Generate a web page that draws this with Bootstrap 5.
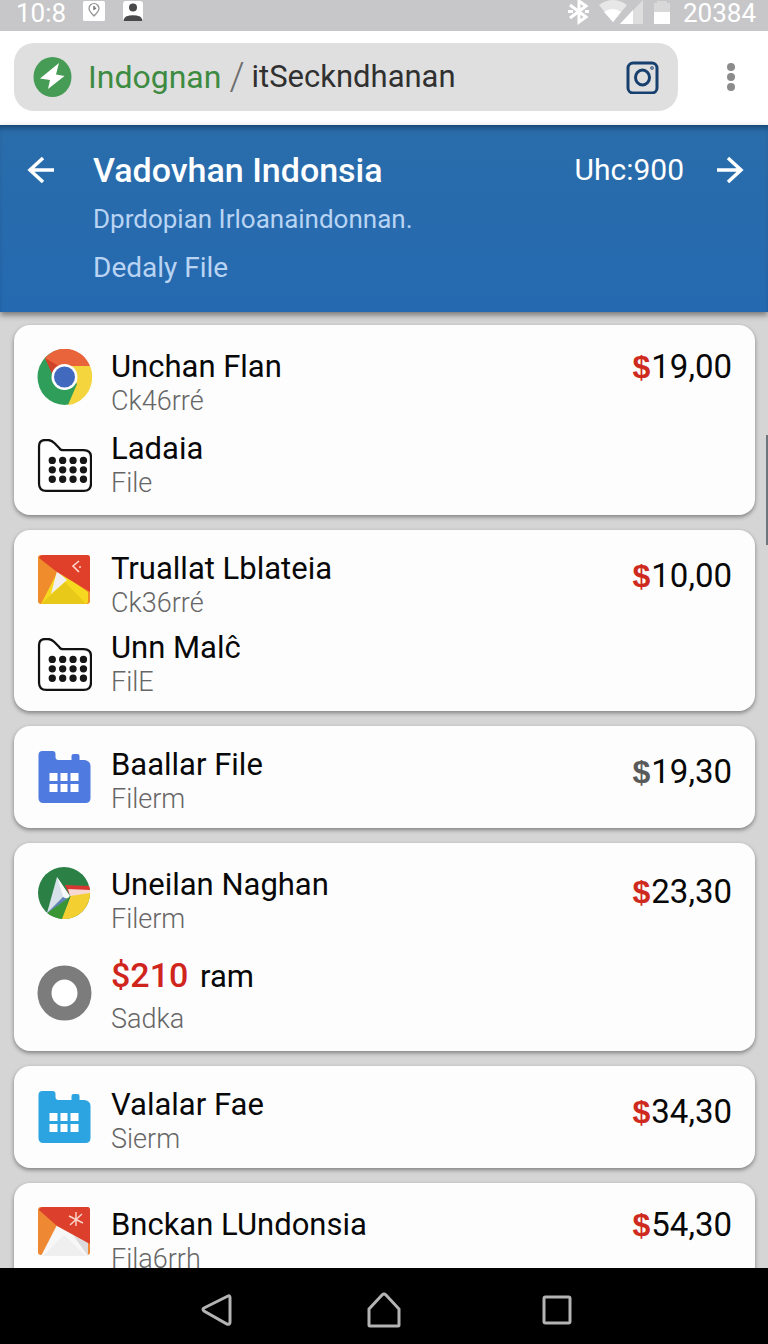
<!DOCTYPE html>
<html lang="id">
<head>
<meta charset="utf-8">
<meta name="viewport" content="width=device-width, initial-scale=1">
<title>Vadovhan Indonsia</title>
<link href="https://cdn.jsdelivr.net/npm/bootstrap@5.3.0/dist/css/bootstrap.min.css" rel="stylesheet">
<style>
  body { font-family: Roboto, "Noto Sans", sans-serif; background: #d5d5d6; color: #080808; }
  svg { display: block; flex: none; }
  .icon-btn { border: 0; background: none; padding: 0; color: inherit; }

  .status-bar { height: 31px; flex: none; background: #c7c7c9; color: #fff; font-size: 26px; line-height: 26px; padding: 0 12px 0 16px; }
  .browser-bar { flex: none; background: #fff; padding: 12px 32px 14px 14px; }
  .address { height: 68px; border-radius: 20px; background: #dfdfe0; padding: 0 19px; margin-right: 48px; font-size: 32px; line-height: 40px; }
  .address a { color: #3d8b40; text-decoration: none; }
  .address .slash { color: #6d6d6d; font-size: 38px; font-weight: 300; margin: 0 7px 0 8px; }
  .address .path { color: #303030; font-size: 31px; }

  .app-header { flex: none; background: linear-gradient(#2a6dab, #2569b0); color: #fff; padding: 25px 24px 24px 27px; z-index: 1;
    box-shadow: 0 3px 6px rgba(0,0,0,.45), inset 0 6px 6px -4px rgba(0,20,40,.55); }
  .app-header h1 { font-size: 34px; line-height: 40px; font-weight: 500; margin: 0; }
  .app-header .text-col { margin-left: 38px; }
  .app-header p { font-size: 28px; line-height: 40px; margin: 9px 0 0; color: #b9d4f3; }
  .app-header .tagline { font-size: 26px; }
  .app-header .total { font-size: 30px; line-height: 40px; margin-right: 32px; }
  .icon-btn.arrow { height: 40px; }

  .list-area { padding: 13px 13px 0 14px; }
  .entry-card { border: 0; border-radius: 16px; background: #fdfdfd; padding: 24px 23px 16px; margin-bottom: 15px;
    box-shadow: 0 2px 4px rgba(0,0,0,.4); }
  .entry-card.snug { padding-top: 21px; padding-bottom: 13px; }
  .entry { gap: 19px; }
  .entry + .entry { margin-top: 14px; }
  .snug .entry + .entry { margin-top: 11px; }
  .entry + .entry.apart { margin-top: 22px; }
  .entry h2 { font-size: 31px; line-height: 36px; font-weight: 400; margin: 0; }
  .entry p { font-size: 27px; line-height: 32px; font-weight: 300; margin: 0; color: #666; }
  .entry.apart p { margin-top: 8px; }
  .amount { color: #d0251c; font-weight: 500; font-size: 34px; margin-right: 4px; }
  .price { font-size: 33px; line-height: 36px; }
  .price.low { margin-top: 7px; }
  .price span { font-family: "Liberation Sans", sans-serif; font-size: 32px; line-height: 32px; font-weight: 700; color: #cf2a20; margin-right: 1px; }
  .price .plain { color: #5a5a5a; }
  .scroll-thumb { position: absolute; right: 0; top: 123px; width: 2px; height: 110px; background: #6c747c; }

  .system-nav { height: 76px; background: #000; color: #b4b4b4; gap: 134px; padding: 8px 0 0 10px; z-index: 2; }
</style>
</head>
<body>
<svg width="0" height="0" class="position-absolute" aria-hidden="true">
  <defs>
    <symbol id="folder" viewBox="0 0 54 54">
      <path d="M2 7Q2 1 8 1H11Q14 1 17 4L22 9Q23 11 26 11H46Q53 11 53 18V44Q53 51 46 51H9Q2 51 2 44Z" fill="#fff" stroke="#111" stroke-width="2.2"/>
      <g stroke="#161616" stroke-width="7.2" stroke-linecap="round" stroke-dasharray="0 10.2">
        <path d="M15 21H46"/><path d="M15 30.300H46"/><path d="M15 39.500H46"/>
      </g>
    </symbol>
    <symbol id="planner" viewBox="0 0 54 54">
      <path d="M1 4Q1 0 5 0H15Q18 0 18 3V6Q18 9 21 9H34V5Q34 3 36 3H40Q42 3 42 5V9H47Q53 10 53 15V47Q53 52 48 52H6Q1 52 1 47Z" fill="currentColor"/>
      <path d="M12 22h8v8h-8zM23 22h7v8h-7zM33 22h8v8h-8zM12 33h8v8h-8zM23 33h7v8h-7zM33 33h8v8h-8z" fill="#fff"/>
    </symbol>
  </defs>
</svg>

<div class="d-flex flex-column vh-100 overflow-hidden">
  <div class="status-bar d-flex justify-content-between">
    <div class="d-flex">
      <span>10:8</span>
      <svg class="ms-3" width="24" height="22" viewBox="0 0 24 22"><rect x="1" y="1" width="22" height="20" rx="1.500" fill="#fff"/><path d="M12 16C8 12 7 10.500 7 8.500a5 5 0 0 1 10 0C17 10.500 16 12 12 16Z" fill="none" stroke="#8d8d90" stroke-width="1.200"/><path d="M12 6v3l2-1" fill="none" stroke="#777" stroke-width="1.500"/></svg>
      <svg class="ms-3" width="22" height="22" viewBox="0 0 22 22"><rect x="1" y="1" width="20" height="20" rx="3" fill="#fff"/><circle cx="11" cy="7.500" r="4" fill="#48484a"/><path d="M2 21Q1 19 4 16.500Q11 14 18 16.500Q21 19 20 21Z" fill="#48484a"/></svg>
    </div>
    <div class="d-flex">
      <svg width="24" height="25" viewBox="0 0 24 25"><path d="M3 5L19 17L12 22V1L19 6L3 18M1 11.500H6M18 11.500H22" fill="none" stroke="#fff" stroke-width="3"/></svg>
      <svg class="ms-2" width="46" height="25" viewBox="0 0 46 25"><path d="M0 5Q14-5 28 5L14 22Z" fill="#e7e7e8"/><path d="M5 12Q14 6 22 12L14 22Z" fill="#fff"/><path d="M21 24L44 0V24Z" fill="#dededf"/><path d="M21 24L34 10V24Z" fill="#fff"/></svg>
      <svg class="ms-2 me-2" width="18" height="25" viewBox="0 0 18 25"><path d="M4 1H14V12H4Z" fill="#d8d8d9"/><path d="M1 3H17V12H1Z" fill="#d8d8d9"/><path d="M1 12H17V24H1Z" fill="#fff"/></svg>
      <span class="ps-1">20384</span>
    </div>
  </div>

  <div class="browser-bar d-flex align-items-center">
    <div class="address d-flex align-items-center flex-grow-1">
      <svg class="me-3" width="39" height="40" viewBox="0 0 39 40"><ellipse cx="19.500" cy="20" rx="19" ry="20" fill="#469b55"/><path d="M26 6L23 17.500L31.500 19L15 32L17 23L7 21.500Z" fill="#fff"/></svg>
      <a href="#">Indognan</a><span class="slash">/</span><span class="path">itSeckndhanan</span>
      <button class="icon-btn ms-auto" type="button" aria-label="Camera">
        <svg width="33" height="33" viewBox="0 0 33 33" fill="none" stroke="#17406f" stroke-width="3"><rect x="2" y="2" width="29" height="30" rx="5"/><ellipse cx="16.500" cy="16.500" rx="7" ry="7.500"/><circle cx="26" cy="7" r=".5" stroke-width="2.500"/></svg>
      </button>
    </div>
    <button class="icon-btn" type="button" aria-label="Menu">
      <svg width="10" height="32" viewBox="0 0 10 32" fill="#8c8c8c"><circle cx="5" cy="6" r="4"/><circle cx="5" cy="16" r="4"/><circle cx="5" cy="26" r="4"/></svg>
    </button>
  </div>

  <header class="app-header d-flex align-items-start position-relative">
    <button class="icon-btn arrow" type="button" aria-label="Back">
      <svg width="28" height="28" viewBox="0 0 28 28" fill="none" stroke="#fff" stroke-width="3.500"><path d="M27 14H3M16 2L3 14L16 26"/></svg>
    </button>
    <div class="text-col flex-grow-1">
      <h1>Vadovhan Indonsia</h1>
      <p class="tagline">Dprdopian Irloanaindonnan.</p>
      <p>Dedaly File</p>
    </div>
    <div class="total">Uhc:900</div>
    <button class="icon-btn arrow" type="button" aria-label="Next">
      <svg width="28" height="28" viewBox="0 0 28 28" fill="none" stroke="#fff" stroke-width="3.500"><path d="M1 14H25M12 2L25 14L12 26"/></svg>
    </button>
  </header>

  <main class="list-area flex-grow-1 overflow-hidden position-relative">
    <div class="scroll-thumb"></div>

    <article class="entry-card d-flex justify-content-between align-items-start">
      <div>
        <div class="entry d-flex">
          <svg width="55" height="56" viewBox="0 0 55 56">
            <ellipse cx="27.500" cy="28" rx="27" ry="28" fill="#2f9e5b"/>
            <path d="M8 9A27 28 0 0 1 53 17H28L15 23Z" fill="#e9643a"/>
            <path d="M8 9L25 19L15 25Z" fill="#cf4328"/>
            <path d="M27 17H53A27 28 0 0 1 31 56L40 35Z" fill="#f4d53d"/>
            <circle cx="27.500" cy="28" r="13" fill="#fff"/><circle cx="27.500" cy="28" r="10.500" fill="#4169bd"/>
          </svg>
          <div><h2>Unchan Flan</h2><p>Ck46rré</p></div>
        </div>
        <div class="entry d-flex">
          <svg class="mt-2" width="55" height="55"><use href="#folder"/></svg>
          <div><h2>Ladaia</h2><p>File</p></div>
        </div>
      </div>
      <div class="price"><span>$</span>19,00</div>
    </article>

    <article class="entry-card snug d-flex justify-content-between align-items-start">
      <div>
        <div class="entry d-flex">
          <svg class="mt-1" width="55" height="52" viewBox="0 0 55 52">
            <rect x="1" y="0" width="52" height="49" rx="3" fill="#f18c2c"/>
            <path d="M4 49L21 16L51 37V46Q51 49 48 49Z" fill="#f6d91f"/>
            <path d="M4 49L28 27L49 49Z" fill="#e8c91a"/>
            <path d="M14 39L20 16L30 25Z" fill="#f1efef"/>
            <path d="M2 3Q3 0 6 0H50Q53 0 53 3V37L20 17Z" fill="#e0402a"/>
            <path d="M42 6L36 11L42 17" fill="none" stroke="#ffd9d0" stroke-width="1.600"/><circle cx="43" cy="12" r="1" fill="#ffd9d0"/>
          </svg>
          <div><h2>Truallat Lblateia</h2><p>Ck36rré</p></div>
        </div>
        <div class="entry d-flex">
          <svg class="mt-2" width="55" height="55"><use href="#folder"/></svg>
          <div><h2>Unn Malĉ</h2><p>FilE</p></div>
        </div>
      </div>
      <div class="price low"><span>$</span>10,00</div>
    </article>

    <article class="entry-card snug d-flex justify-content-between align-items-start">
      <div class="entry d-flex">
        <svg class="mt-1" width="55" height="54" color="#4f7be0"><use href="#planner"/></svg>
        <div><h2>Baallar File</h2><p>Filerm</p></div>
      </div>
      <div class="price low"><span class="plain">$</span>19,30</div>
    </article>

    <article class="entry-card d-flex justify-content-between align-items-start">
      <div>
        <div class="entry d-flex">
          <svg width="55" height="54" viewBox="0 0 55 54">
            <circle cx="27" cy="26" r="26" fill="#2b8046"/>
            <path d="M10 46L32 29L26 52Q17 51 10 46Z" fill="#3a9634"/>
            <path d="M25 52L34 28L53 24A26 26 0 0 1 25 52Z" fill="#f3cf32"/>
            <path d="M28 18L52 19L53 23L32 27Z" fill="#d93832"/>
            <path d="M31 22L53 23V26L33 29Z" fill="#f7d9d3"/>
            <path d="M20 10L10 46L32 29Z" fill="#d8e1ea"/>
            <path d="M20 10L33 29Q29 34 26 29Z" fill="#fafafa"/>
            <path d="M10 46L26 30L30 32Z" fill="#5f83b4"/>
          </svg>
          <div><h2>Uneilan Naghan</h2><p>Filerm</p></div>
        </div>
        <div class="entry apart d-flex">
          <svg class="mt-2" width="55" height="56" viewBox="0 0 55 56"><ellipse cx="27.500" cy="28" rx="20" ry="20.500" fill="#fff" stroke="#7c7c7c" stroke-width="14"/></svg>
          <div><h2><span class="amount">$210</span> ram</h2><p>Sadka</p></div>
        </div>
      </div>
      <div class="price low"><span>$</span>23,30</div>
    </article>

    <article class="entry-card snug d-flex justify-content-between align-items-start">
      <div class="entry d-flex">
        <svg class="mt-1" width="55" height="54" color="#2ba4e1"><use href="#planner"/></svg>
        <div><h2>Valalar Fae</h2><p>Sierm</p></div>
      </div>
      <div class="price low"><span>$</span>34,30</div>
    </article>

    <article class="entry-card d-flex justify-content-between align-items-start">
      <div class="entry d-flex">
        <svg width="55" height="52" viewBox="0 0 55 52">
          <rect x="1" y="0" width="52" height="48" rx="3" fill="#ee8833"/>
          <path d="M4 49L20 18L51 36V49Z" fill="#f8f7f7"/><path d="M51 36V49L36 28Z" fill="#dddadd"/>
          <path d="M6 49L27 28L49 49Z" fill="#efefef"/>
          <path d="M2 3Q3 0 6 0H50Q53 0 53 3V37L20 19Z" fill="#dc402c"/>
          <path d="M39 5V19M32 9L46 16M45 7L33 18" stroke="#fbd5cb" stroke-width="1.400"/>
        </svg>
        <div><h2>Bnckan LUndonsia</h2><p>Fila6rrh</p></div>
      </div>
      <div class="price"><span>$</span>54,30</div>
    </article>
  </main>

  <nav class="system-nav d-flex justify-content-center align-items-center flex-shrink-0" aria-label="System">
    <button class="icon-btn" type="button" aria-label="Back"><svg width="32" height="36" viewBox="0 0 32 36" fill="none" stroke="currentColor" stroke-width="3"><path d="M28 4Q30 3 30 6V30Q30 33 27 32L4 19Q2 17 4 16Z"/></svg></button>
    <button class="icon-btn" type="button" aria-label="Home"><svg width="36" height="38" viewBox="0 0 36 38" fill="none" stroke="currentColor" stroke-width="3"><path d="M3 18L16 4Q18 2 20 4L33 18V34Q33 35 32 35H4Q3 35 3 34Z"/></svg></button>
    <button class="icon-btn" type="button" aria-label="Recent"><svg width="42" height="32" viewBox="0 0 42 32" fill="none" stroke="currentColor" stroke-width="3"><rect x="8" y="3" width="26" height="26" rx="1.500"/></svg></button>
  </nav>
</div>
<script src="https://cdn.jsdelivr.net/npm/bootstrap@5.3.0/dist/js/bootstrap.bundle.min.js"></script>
</body>
</html>
